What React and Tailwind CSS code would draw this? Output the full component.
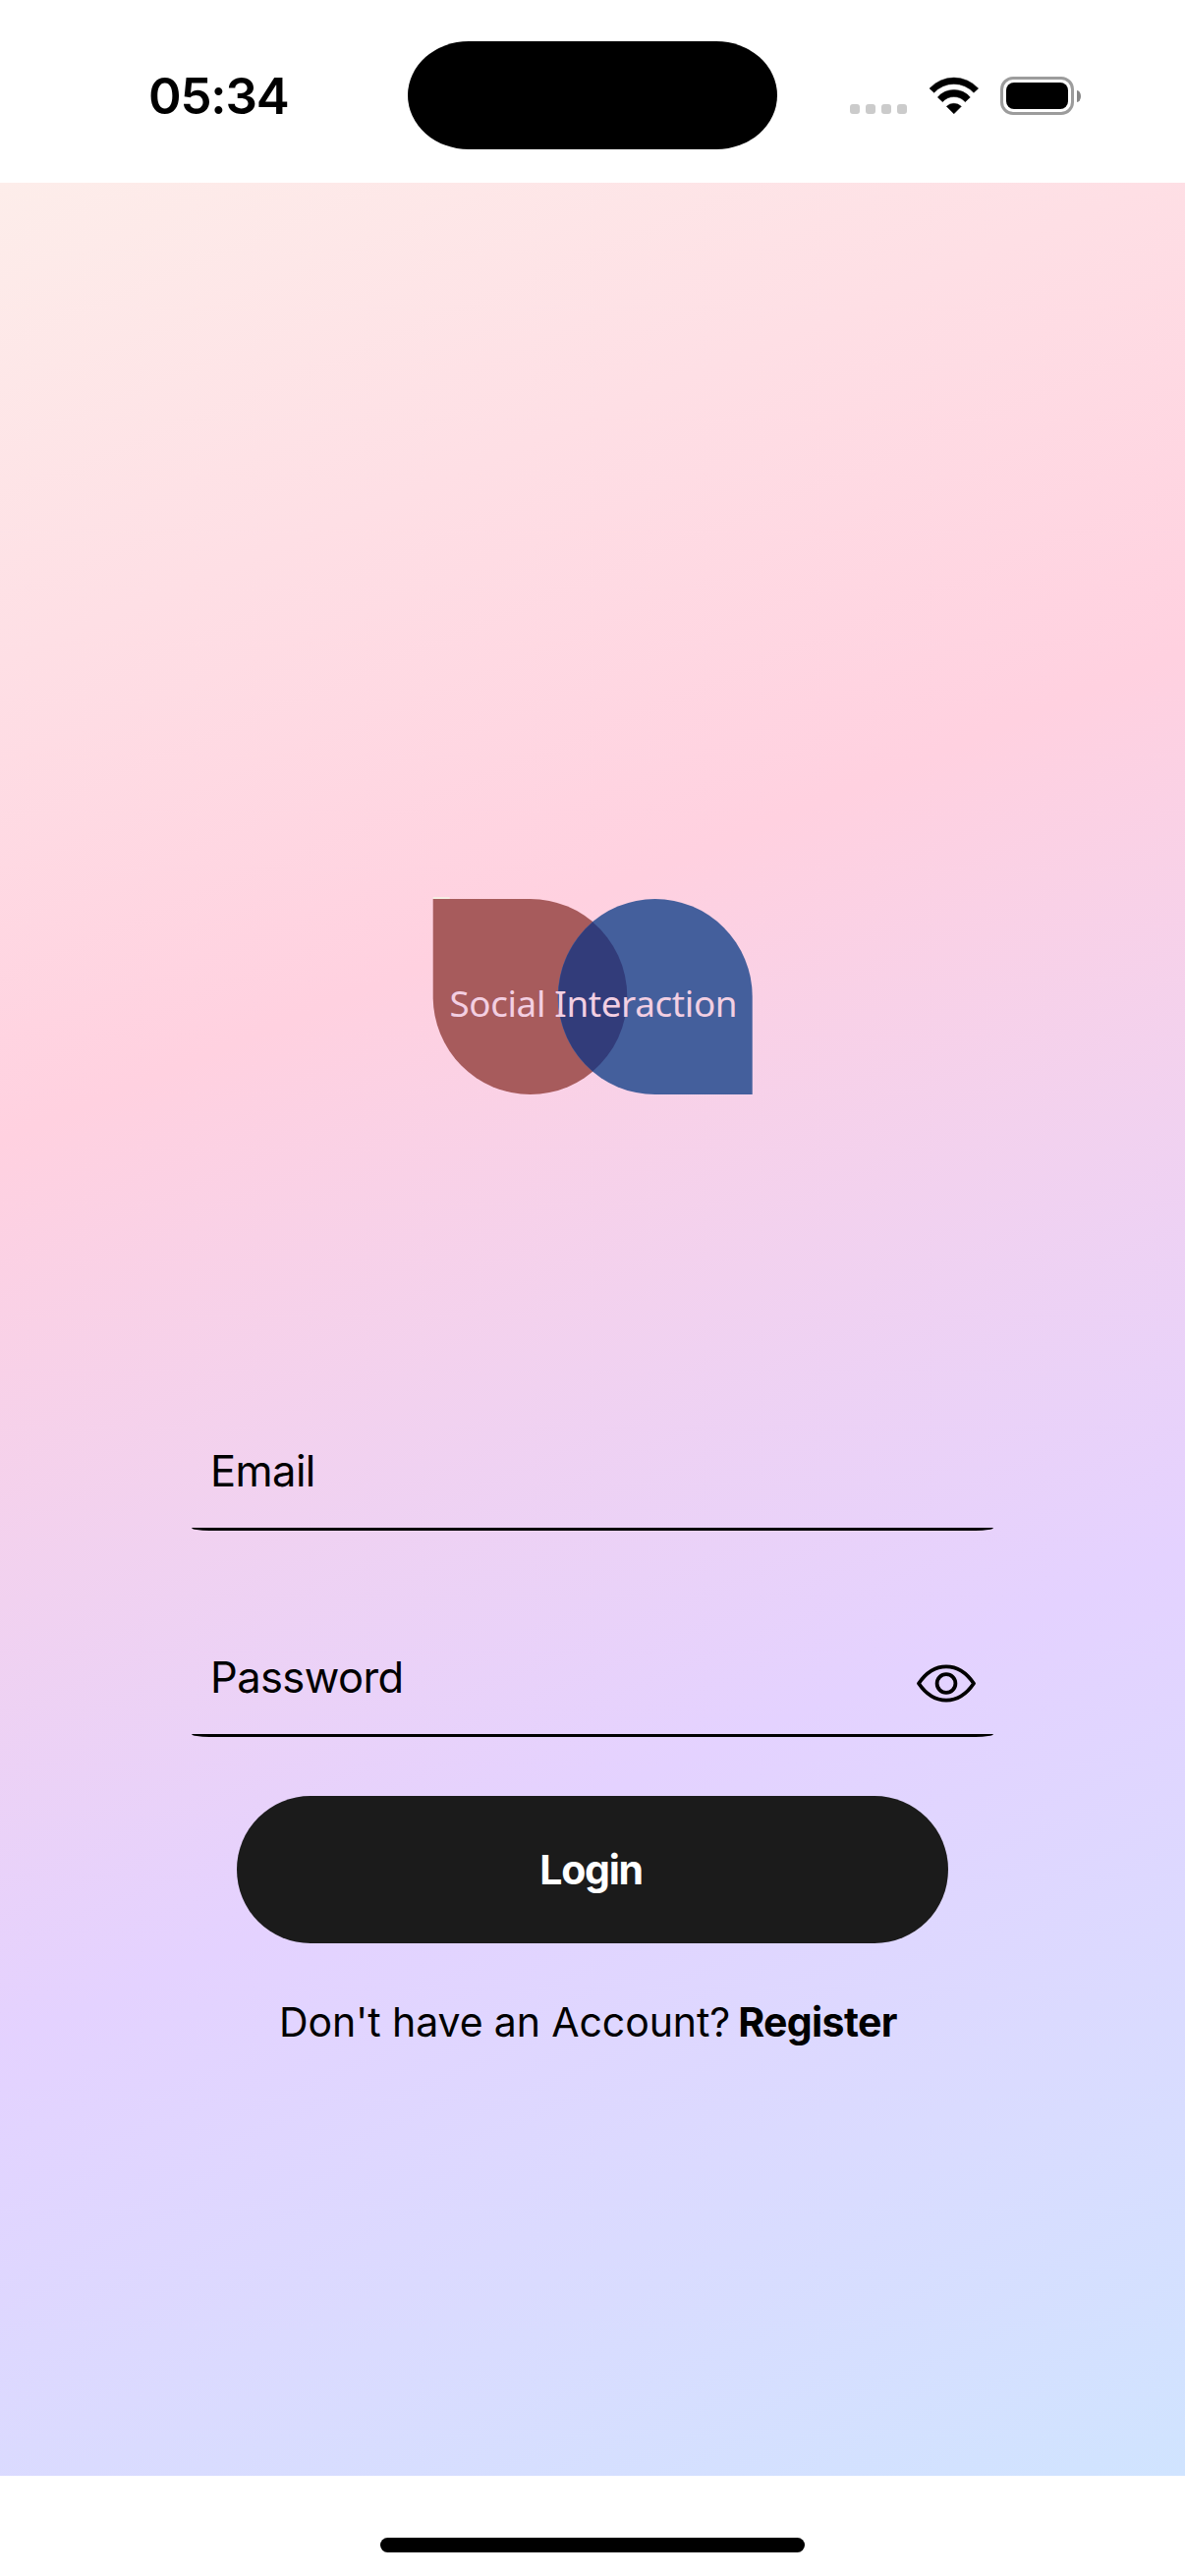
import React from 'react';

function WifiIcon() {
  return (
    <svg className="ml-[70px] h-[39px] w-[52px]" viewBox="494 144 156 117" fill="black" stroke="black" strokeWidth="1.5" strokeLinejoin="round">
      <path d="M497 180A101 101 0 0 1 646 180L632 193A82 82 0 0 0 511 193Z" />
      <path d="M522 207A65 65 0 0 1 621 207L606 221A46 46 0 0 0 537 221Z" />
      <path d="M549 235A32 32 0 0 1 594 235L571.5 257.5Z" />
    </svg>
  );
}

function StatusBar() {
  return (
    <header className="flex h-[186px] items-start bg-white">
      <div className="ml-[151px] mt-[68px] w-[264px] text-[51px] font-semibold leading-[60px] tracking-[-1.2px]">05:34</div>
      <div className="mt-[42px] h-[110px] w-[376px] shrink-0 bg-black [border-radius:62px/55px]" />
      <div className="mt-[78px] flex h-[39px]">
        <div className="ml-[74px] mt-[28px] flex w-0 gap-[6px]">
          {[0, 1, 2, 3].map((i) => (
            <span key={i} className="size-[10px] shrink-0 rounded-[3px] bg-[#cbcbcb]" />
          ))}
        </div>
        <div className="ml-[10px] flex">
          <WifiIcon />
          <div className="ml-[21px] h-[39px] w-[75px] rounded-[13px] border-3 border-[#9c9c9c] p-[3px]">
            <div className="h-full w-full rounded-[8px] bg-black" />
          </div>
          <div className="ml-[3px] mt-[13.5px] h-[12px] w-[4px] bg-[#868686] [border-radius:0_4px_4px_0/0_6px_6px_0]" />
        </div>
      </div>
    </header>
  );
}

function Logo() {
  return (
    <svg className="mt-[727px] h-[201px] w-[326px] shrink-0" viewBox="-0.7 -2 326 201">
      <path d="M0 -1H17" stroke="#f6eee4" strokeWidth="2" />
      <path d="M0 0H99A99 99.5 0 1 1 0 99.5Z" fill="#a75b5c" />
      <path d="M325 199H226A99 99.5 0 1 1 325 99.5Z" fill="#445f9c" />
      <path d="M162.5 23.5A99 99.5 0 0 1 162.5 175.5A99 99.5 0 0 1 162.5 23.5Z" fill="#323c7a" />
      <text x="16.7" y="119.5" fontSize="36.8" letterSpacing="-0.35" fill="#f3cfe2" fontFamily="'Noto Sans', 'Open Sans', sans-serif">
        Social Interaction
      </text>
    </svg>
  );
}

function EyeIcon() {
  return (
    <svg className="mr-[18px] mt-[14px] h-[39px] w-[60px]" viewBox="0 0 60 39" fill="none" stroke="black" strokeWidth="3.8" strokeLinejoin="round">
      <path d="M2 19.5C10.5 7 20 2.4 30 2.4S49.5 7 58 19.5C49.5 32 40 36.6 30 36.6S10.5 32 2 19.5Z" />
      <circle cx="30" cy="19.5" r="9.4" />
    </svg>
  );
}

function Field({ label, children }) {
  return (
    <div className="flex w-[816px] flex-col">
      <div className="flex h-[118px] items-center justify-between pl-[19px]">
        <span className="pt-[2px] text-[43.5px] leading-[60px] tracking-[-0.6px]">{label}</span>
        {children}
      </div>
      <div className="h-[3px] bg-black [border-radius:0_0_18px_18px/0_0_3px_3px]" />
    </div>
  );
}

export default function App() {
  return (
    <div className="flex h-[2622px] w-[1206px] flex-col overflow-hidden bg-white font-['Inter',sans-serif] text-black">
      <StatusBar />
      <main className="flex h-[2334px] flex-col items-center bg-[linear-gradient(157.5deg,#fdedea_0%,#ffd1e0_34.4%,#e4d2ff_66.8%,#d0e4ff_100%)]">
        <Logo />
        <div className="mt-[323px] flex flex-col gap-[89px]">
          <Field label="Email" />
          <Field label="Password">
            <EyeIcon />
          </Field>
        </div>
        <button className="mt-[60px] h-[150px] w-[724px] shrink-0 rounded-full bg-[#1b1b1b] pr-[3px] pt-[1px] text-[41px] font-bold tracking-[-1.3px] text-white">
          Login
        </button>
        <p className="mt-[50px] flex w-[638px] gap-[8px] whitespace-nowrap text-[41px] leading-[60px]">
          <span className="tracking-[-0.1px]">Don't have an Account?</span>
          <span className="font-bold tracking-[-0.6px]">Register</span>
        </p>
      </main>
      <footer className="flex h-[102px] justify-center bg-white">
        <div className="mt-[63px] h-[15px] w-[432px] rounded-full bg-black" />
      </footer>
    </div>
  );
}
